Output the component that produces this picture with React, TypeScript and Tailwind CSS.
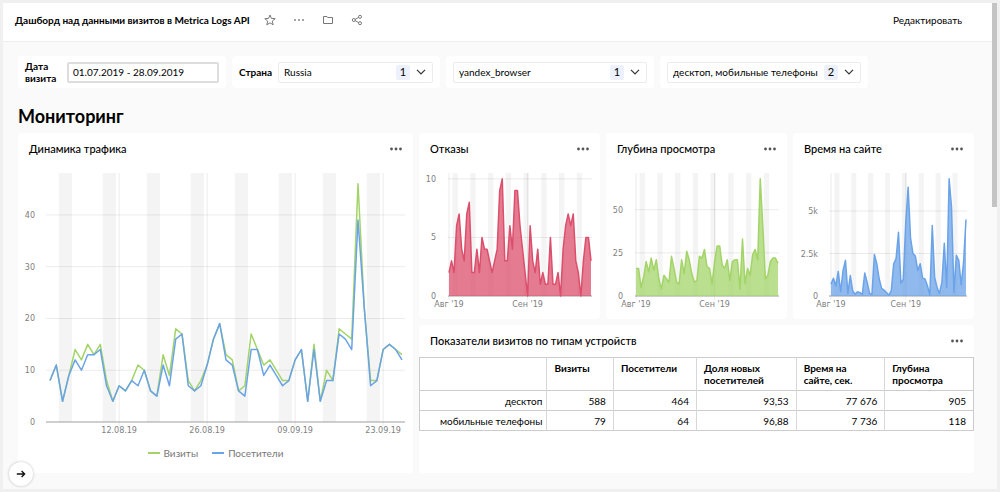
import type { ReactNode } from "react";

const visits = [
  8, 11, 4, 9, 14, 12, 15, 13, 15, 8, 4, 7, 6, 8, 11, 10, 6, 5, 13, 9, 18, 17, 8, 6, 8, 11, 16, 19, 13, 12, 6, 7, 17,
  14, 11, 12, 10, 8, 8, 12, 14, 4, 15, 4, 10, 8, 18, 17, 16, 46, 22, 8, 8, 14, 15, 14, 13,
];
const visitors = [
  8, 11, 4, 9, 12, 10, 13, 13, 14, 7, 4, 7, 6, 8, 7, 10, 6, 5, 11, 7, 16, 17, 7, 6, 7, 11, 16, 19, 12, 11, 6, 5, 14,
  14, 9, 11, 9, 7, 8, 12, 14, 4, 14, 4, 8, 8, 17, 16, 14, 39, 22, 7, 8, 14, 15, 14, 12,
];
const bounces = [
  2, 3, 2, 6, 7, 4, 3, 7, 8, 2, 2, 4, 2, 5, 4, 4, 3, 2, 3, 4, 9, 10, 3, 3, 6, 4, 9, 9, 6, 4, 2, 0, 6, 3, 2, 4, 1, 2,
  1, 1, 5, 1, 1, 2, 0, 4, 6, 7, 6, 7, 3, 2, 0, 3, 5, 5, 3,
];
const depth = [
  16, 16, 5, 11, 20, 14, 22, 15, 21, 10, 4, 12, 10, 8, 23, 16, 8, 7, 21, 13, 26, 21, 13, 8, 9, 23, 22, 27, 17, 16, 7,
  20, 29, 29, 18, 16, 21, 9, 20, 21, 21, 4, 33, 7, 16, 12, 24, 27, 21, 68, 41, 10, 12, 20, 22, 22, 19,
];
const timeOnSite = [
  700, 1050, 600, 1450, 250, 1500, 2100, 150, 1200, 300, 100, 250, 200, 100, 1350, 800, 150, 100, 2450, 1900, 1000,
  450, 350, 200, 50, 300, 1900, 2200, 3750, 750, 1000, 4300, 6400, 3400, 2500, 2350, 1500, 1900, 1050, 1000, 600, 50,
  4150, 1100, 500, 150, 800, 3100, 500, 6900, 5200, 200, 2400, 2100, 650, 2000, 4500,
];

type Series = { data: number[]; color: string; fill?: boolean };
type ChartProps = {
  label: string;
  width: number;
  height: number;
  left: number;
  right: number;
  first: number;
  last: number;
  base: number;
  max: number;
  labelX: number;
  yTicks: { value: number; text: string }[];
  xTicks: { day: number; text: string }[];
  series: Series[];
  strokeWidth: number;
};

function Chart(p: ChartProps) {
  const top = 8;
  const step = (p.last - p.first) / 56;
  const x = (day: number) => p.first + day * step;
  const y = (v: number) => p.base - (v / p.max) * (p.base - top);
  const weekends = [0, 1, 2, 3, 4, 5, 6, 7];
  return (
    <svg
      viewBox={`0 0 ${p.width} ${p.height}`}
      role="img"
      aria-label={p.label}
      className="block h-auto w-full font-['DejaVu_Sans',sans-serif] text-[8px]"
    >
      {weekends.map((w) => (
        <rect key={w} x={x(w * 7 + 1.4)} y={top} width={step * 2.1} height={p.base - top} fill="#f4f4f4" />
      ))}
      {p.yTicks.map((t) => (
        <g key={t.text}>
          <line x1={p.left} x2={p.right} y1={y(t.value)} y2={y(t.value)} stroke="#000" strokeOpacity={0.08} />
          <text x={p.labelX} y={y(t.value) + 3} textAnchor="end" fill="#808080">
            {t.text}
          </text>
        </g>
      ))}
      {p.xTicks.map((t) => (
        <g key={t.text}>
          <line x1={x(t.day)} x2={x(t.day)} y1={top} y2={p.base + 4} stroke="#000" strokeOpacity={0.08} />
          <text x={x(t.day)} y={p.base + 11} textAnchor="middle" fill="#808080">
            {t.text}
          </text>
        </g>
      ))}
      <line x1={p.left} x2={p.right} y1={p.base} y2={p.base} stroke="#a8a8a8" />
      {p.series.map((s) => {
        const pts = s.data.map((v, i) => `${x(i).toFixed(2)},${y(v).toFixed(2)}`).join(" ");
        return (
          <g key={s.color}>
            {s.fill && (
              <polygon points={`${x(0)},${p.base} ${pts} ${x(56)},${p.base}`} fill={s.color} fillOpacity={0.75} />
            )}
            <polyline points={pts} fill="none" stroke={s.color} strokeWidth={p.strokeWidth} strokeLinejoin="round" />
          </g>
        );
      })}
    </svg>
  );
}

function Dots({ className }: { className: string }) {
  return (
    <svg viewBox="0 0 12 4" className={className} fill="currentColor" aria-hidden="true">
      <circle cx="1.5" cy="2" r="1.4" />
      <circle cx="6" cy="2" r="1.4" />
      <circle cx="10.5" cy="2" r="1.4" />
    </svg>
  );
}

function Card({ title, className = "", children }: { title: string; className?: string; children: ReactNode }) {
  return (
    <section className={`min-w-0 rounded-sm bg-white ${className}`}>
      <header className="flex h-8 items-center justify-between px-[11px]">
        <h2 className="text-[11px] leading-4 font-medium">{title}</h2>
        <button type="button" aria-label="Меню" className="text-[#555]">
          <Dots className="h-1 w-3" />
        </button>
      </header>
      {children}
    </section>
  );
}

function FilterSelect({ id, label, value, count }: { id: string; label?: string; value: string; count: number }) {
  return (
    <div className="flex h-8 min-w-0 items-center gap-1.5 rounded-sm bg-white px-[7px]">
      {label && (
        <label htmlFor={id} className="text-[10px] font-bold">
          {label}
        </label>
      )}
      <div className="relative min-w-0 flex-1">
        <select
          id={id}
          aria-label={label ?? value}
          className="block h-[21px] w-full appearance-none rounded-xs border border-[#ececec] bg-white pr-9 pl-[5px] text-[10px]"
        >
          <option>{value}</option>
        </select>
        <div className="pointer-events-none absolute inset-y-0 right-[7px] flex items-center gap-1.5">
          <span className="flex h-[15px] w-3.5 items-center justify-center rounded-xs bg-[#edf1fd] text-[11px]">
            {count}
          </span>
          <svg viewBox="0 0 10 6" className="h-1.5 w-2.5" fill="none" stroke="#333" strokeWidth="1.2" aria-hidden="true">
            <path d="M1 .8 5 4.8 9 .8" />
          </svg>
        </div>
      </div>
    </div>
  );
}

const columns = ["Визиты", "Посетители", "Доля новых посетителей", "Время на сайте, сек.", "Глубина просмотра"];
const rows = [
  { name: "десктоп", values: ["588", "464", "93,53", "77 676", "905"] },
  { name: "мобильные телефоны", values: ["79", "64", "96,88", "7 736", "118"] },
];
const small = {
  width: 181,
  height: 148,
  base: 131,
  strokeWidth: 1.5,
};
const months = [
  { day: 0, text: "Авг '19" },
  { day: 31, text: "Сен '19" },
];

export default function App() {
  return (
    <div className="flex min-h-screen bg-[#f0f0f0] p-[3px] font-[Lato,sans-serif] text-black">
      <div className="relative flex min-w-0 flex-1 flex-col bg-[#fafafa]">
        <header className="mr-[5px] flex h-[39px] items-center border-b border-[#eeeeee] bg-white pr-[30px] pb-1 pl-3">
          <h1 className="text-[10px] font-bold">Дашборд над данными визитов в Metrica Logs API</h1>
          <div className="ml-3.5 flex items-center gap-[17px] text-[#777]">
            <button type="button" aria-label="В избранное">
              <svg viewBox="0 0 12 12" className="size-3" fill="none" stroke="currentColor" strokeWidth="1">
                <path d="M6 1 7.4 4.4 11.2 4.7 8.3 7.1 9.2 10.8 6 8.8 2.8 10.8 3.7 7.1.8 4.7 4.6 4.4Z" />
              </svg>
            </button>
            <button type="button" aria-label="Ещё">
              <svg viewBox="0 0 12 12" className="size-3" fill="currentColor">
                <circle cx="2" cy="6" r=".9" />
                <circle cx="6" cy="6" r=".9" />
                <circle cx="10" cy="6" r=".9" />
              </svg>
            </button>
            <button type="button" aria-label="Папка">
              <svg viewBox="0 0 12 12" className="size-3" fill="none" stroke="currentColor" strokeWidth="1">
                <path d="M1.5 2.5V9.5H10.5V3.5H5.7L5 2.5Z" />
              </svg>
            </button>
            <button type="button" aria-label="Поделиться">
              <svg viewBox="0 0 12 12" className="size-3" fill="none" stroke="currentColor" strokeWidth="1">
                <circle cx="2.8" cy="6" r="1.5" />
                <circle cx="9" cy="2.8" r="1.5" />
                <circle cx="9" cy="9.2" r="1.5" />
                <path d="M4.2 5.3 7.6 3.5M4.2 6.7 7.6 8.5" />
              </svg>
            </button>
          </div>
          <button type="button" className="ml-auto text-[10px]">
            Редактировать
          </button>
        </header>

        <main className="flex flex-col pt-3.5 pr-[23px] pb-4 pl-[15px]">
          <form className="grid grid-cols-[minmax(0,208fr)_minmax(0,208fr)_minmax(0,208fr)_minmax(0,208fr)_minmax(0,100fr)] gap-1.5">
            <div className="flex h-8 items-center gap-2 rounded-sm bg-white px-[7px]">
              <label htmlFor="dates" className="w-[34px] text-[10px] leading-3 font-bold">
                Дата визита
              </label>
              <input
                id="dates"
                defaultValue="01.07.2019 - 28.09.2019"
                className="h-[21px] min-w-0 flex-1 rounded-xs border-2 border-[#dddddd] bg-white px-1 text-[10px]"
              />
            </div>
            <FilterSelect id="country" label="Страна" value="Russia" count={1} />
            <FilterSelect id="browser" value="yandex_browser" count={1} />
            <FilterSelect id="device" value="десктоп, мобильные телефоны" count={2} />
          </form>

          <h2 className="mt-4 mb-[5px] text-[18px] leading-6 font-bold">Мониторинг</h2>

          <div className="grid grid-cols-[395fr_181fr_181fr_181fr] grid-rows-[auto_1fr] gap-1.5">
            <Card title="Динамика трафика" className="row-span-2 pb-3">
              <Chart
                label="Динамика трафика"
                width={395}
                height={273}
                left={28}
                right={387}
                first={32}
                last={384}
                base={257}
                max={48.1}
                labelX={17}
                yTicks={[
                  { value: 0, text: "0" },
                  { value: 10, text: "10" },
                  { value: 20, text: "20" },
                  { value: 30, text: "30" },
                  { value: 40, text: "40" },
                ]}
                xTicks={[
                  { day: 11, text: "12.08.19" },
                  { day: 25, text: "26.08.19" },
                  { day: 39, text: "09.09.19" },
                  { day: 53, text: "23.09.19" },
                ]}
                series={[
                  { data: visits, color: "#a3d468" },
                  { data: visitors, color: "#6ba3e8" },
                ]}
                strokeWidth={1.5}
              />
              <ul className="flex justify-center gap-3.5 pt-[7px] text-[10px] leading-4 text-[#777]">
                <li className="flex items-center gap-1">
                  <span className="h-0.5 w-3 bg-[#a3d468]" />
                  Визиты
                </li>
                <li className="flex items-center gap-1">
                  <span className="h-0.5 w-3 bg-[#6ba3e8]" />
                  Посетители
                </li>
              </ul>
            </Card>

            <Card title="Отказы" className="pb-1.5">
              <Chart
                {...small}
                label="Отказы"
                left={29}
                right={173}
                first={30}
                last={172}
                max={10.5}
                labelX={17}
                yTicks={[
                  { value: 0, text: "0" },
                  { value: 5, text: "5" },
                  { value: 10, text: "10" },
                ]}
                xTicks={months}
                series={[{ data: bounces, color: "#dc4f6c", fill: true }]}
              />
            </Card>
            <Card title="Глубина просмотра" className="pb-1.5">
              <Chart
                {...small}
                label="Глубина просмотра"
                left={29}
                right={173}
                first={30}
                last={172}
                max={71.3}
                labelX={17}
                yTicks={[
                  { value: 0, text: "0" },
                  { value: 25, text: "25" },
                  { value: 50, text: "50" },
                ]}
                xTicks={months}
                series={[{ data: depth, color: "#a3d468", fill: true }]}
              />
            </Card>
            <Card title="Время на сайте" className="pb-1.5">
              <Chart
                {...small}
                label="Время на сайте"
                left={36}
                right={174}
                first={38}
                last={173}
                max={7240}
                labelX={25}
                yTicks={[
                  { value: 0, text: "0" },
                  { value: 2500, text: "2.5k" },
                  { value: 5000, text: "5k" },
                ]}
                xTicks={months}
                series={[{ data: timeOnSite, color: "#6ba3e8", fill: true }]}
              />
            </Card>

            <Card title="Показатели визитов по типам устройств" className="col-span-3">
              <table className="w-full table-fixed border-collapse border border-[#cccccc] text-[10px] leading-3">
                <colgroup>
                  <col className="w-[23%]" />
                  <col className="w-[12%]" />
                  <col className="w-[15%]" />
                  <col className="w-[18%]" />
                  <col className="w-[16%]" />
                  <col className="w-[16%]" />
                </colgroup>
                <thead>
                  <tr className="h-8 border-b border-[#cccccc]">
                    <td />
                    {columns.map((c) => (
                      <th key={c} scope="col" className="border-l border-[#d8d8d8] px-[7px] py-1 text-left align-top font-bold">
                        {c}
                      </th>
                    ))}
                  </tr>
                </thead>
                <tbody>
                  {rows.map((r) => (
                    <tr key={r.name} className="h-5 border-b border-[#cccccc]">
                      <th scope="row" className="px-1 text-right font-normal">
                        {r.name}
                      </th>
                      {r.values.map((v) => (
                        <td key={v} className="border-l border-[#d8d8d8] px-[7px] text-right">
                          {v}
                        </td>
                      ))}
                    </tr>
                  ))}
                </tbody>
              </table>
            </Card>
          </div>
        </main>

        <button
          type="button"
          aria-label="Развернуть"
          className="absolute bottom-[3px] left-1.5 flex size-6 items-center justify-center rounded-full bg-white shadow-[0_0_3px_rgba(0,0,0,0.25)]"
        >
          <svg viewBox="0 0 10 8" className="h-2 w-2.5" fill="none" stroke="#111" strokeWidth="1.4">
            <path d="M.8 4H8.6M5.6 1 8.6 4 5.6 7" />
          </svg>
        </button>
        <div className="absolute top-0 right-0 h-[42%] w-[5px] bg-[#c4c4c4]" />
      </div>
    </div>
  );
}
